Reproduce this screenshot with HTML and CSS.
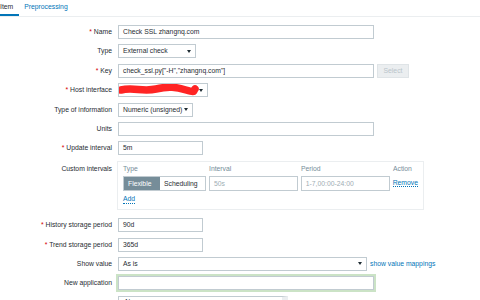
FILE: index.html
```html
<!DOCTYPE html>
<html lang="en">
<head>
    <meta charset="UTF-8" />
    <title>Item</title>
    <link rel="stylesheet" href="styles.css">
</head>
<body>
    <ul class="tabs">
        <li class="tab active">Item</li>
        <li class="tab">Preprocessing</li>
    </ul>

    <div class="form">
        <label class="form-label"><span class="req">*</span> Name</label>
        <div class="field"><div class="input w-wide">Check SSL zhangnq.com</div></div>

        <label class="form-label">Type</label>
        <div class="field"><div class="select w-type">External check</div></div>

        <label class="form-label"><span class="req">*</span> Key</label>
        <div class="field">
            <div class="input w-wide">check_ssl.py["-H","zhangnq.com"]</div>
            <button class="btn-disabled">Select</button>
        </div>

        <label class="form-label"><span class="req">*</span> Host interface</label>
        <div class="field">
            <div class="select w-host">
                <svg class="scribble" width="82" height="12" viewBox="0 0 82 12">
                    <path d="M3 6 C 15 3, 25 8, 38 5 S 58 3, 68 6 S 75 7, 77 5" stroke="#ff2424" stroke-width="7.5" stroke-linecap="round" fill="none"/>
                </svg>
            </div>
        </div>

        <label class="form-label">Type of information</label>
        <div class="field"><div class="select w-info">Numeric (unsigned)</div></div>

        <label class="form-label">Units</label>
        <div class="field"><div class="input w-wide"></div></div>

        <label class="form-label"><span class="req">*</span> Update interval</label>
        <div class="field"><div class="input w-small">5m</div></div>

        <label class="form-label label-top">Custom intervals</label>
        <div class="field">
            <div class="intervals">
                <div class="int-row int-head">
                    <span class="c1">Type</span>
                    <span class="c2">Interval</span>
                    <span class="c3">Period</span>
                    <span class="c4">Action</span>
                </div>
                <div class="int-row">
                    <div class="c1 radio-group">
                        <span class="radio on">Flexible</span>
                        <span class="radio">Scheduling</span>
                    </div>
                    <div class="c2 input muted">50s</div>
                    <div class="c3 input muted">1-7,00:00-24:00</div>
                    <a class="c4 link dotted">Remove</a>
                </div>
                <a class="link dotted add">Add</a>
            </div>
        </div>

        <label class="form-label"><span class="req">*</span> History storage period</label>
        <div class="field"><div class="input w-small">90d</div></div>

        <label class="form-label"><span class="req">*</span> Trend storage period</label>
        <div class="field"><div class="input w-small">365d</div></div>

        <label class="form-label">Show value</label>
        <div class="field">
            <div class="select w-show">As is</div>
            <a class="link">show value mappings</a>
        </div>

        <label class="form-label">New application</label>
        <div class="field"><div class="input w-wide focused"></div></div>

        <label class="form-label label-top">Applications</label>
        <div class="field">
            <div class="listbox">
                <div>-None-</div>
                <div>Checks</div>
            </div>
        </div>
    </div>
</body>
</html>
```

FILE: styles.css
```css
body {
    font-family: "Liberation Sans", Arial, sans-serif;
    font-size: 6.8px;
    color: #1f2c33;
    background: #fff;
    margin: 0;
    overflow: hidden;
}
.tabs {
    list-style: none;
    margin: 0;
    padding: 0;
    display: flex;
    height: 16px;
    border-bottom: 1px solid #ebeef0;
}
.tab {
    padding: 0 5.5px;
    line-height: 14px;
    color: #0275b8;
}
.tab.active {
    margin-left: -5.5px;
    color: #1f2c33;
    border-bottom: 2px solid #0275b8;
}
.form {
    display: grid;
    grid-template-columns: 112px 1fr;
    column-gap: 6px;
    row-gap: 5.4px;
    padding-top: 8px;
}
.form-label {
    text-align: right;
    line-height: 14px;
    white-space: nowrap;
}
.label-top {
    padding-top: 1px;
}
.req {
    color: #d40000;
}
.field {
    display: flex;
    align-items: center;
    gap: 3px;
    min-height: 14px;
}
.input,
.select {
    box-sizing: border-box;
    height: 14px;
    line-height: 12px;
    border: 1px solid #c1cbd1;
    padding: 0 4px;
    background: #fff;
    white-space: nowrap;
    overflow: hidden;
}
.select {
    position: relative;
    padding-right: 12px;
}
.select::after {
    content: "";
    position: absolute;
    right: 4px;
    top: 4.5px;
    border-left: 2.5px solid transparent;
    border-right: 2.5px solid transparent;
    border-top: 3.5px solid #1f2c33;
}
.w-wide { width: 256px; }
.w-small { width: 85px; }
.w-type { width: 78px; }
.w-host { width: 90px; }
.w-info { width: 75px; }
.w-show { width: 249px; }
.scribble {
    position: absolute;
    left: -1px;
    top: 0;
}
.btn-disabled {
    box-sizing: border-box;
    width: 32px;
    height: 14px;
    padding: 0;
    font: inherit;
    color: #b9c4ca;
    background: #ebeef0;
    border: 1px solid #dfe4e7;
}
.link {
    color: #0275b8;
    white-space: nowrap;
}
.dotted {
    border-bottom: 1px dotted #0275b8;
}
.focused {
    box-shadow: 0 0 0 2px #cbe3c6;
}
.intervals {
    box-sizing: border-box;
    width: 307px;
    height: 49px;
    margin-left: -1px;
    margin-bottom: 3px;
    border: 1px solid #ebeef0;
    padding: 2px 5px 0;
}
.int-row {
    display: flex;
    align-items: center;
    gap: 3px;
}
.int-head {
    color: #768d99;
    line-height: 10px;
    margin-bottom: 2px;
}
.c1 { width: 83px; }
.c2 { width: 89px; }
.c3 { width: 89px; }
.c4 { width: auto; }
.int-row .input {
    height: 15px;
    line-height: 13px;
}
.muted {
    color: #a0adb4;
}
.radio-group {
    display: flex;
    height: 15px;
    box-sizing: border-box;
    border: 1px solid #c1cbd1;
}
.radio {
    line-height: 13px;
    padding: 0 4px;
    color: #1f2c33;
}
.radio.on {
    width: 36px;
    box-sizing: border-box;
    background: #768d99;
    color: #fff;
}
.add {
    display: inline-block;
    margin-top: 4px;
    line-height: 8px;
}
.listbox {
    box-sizing: border-box;
    width: 170px;
    height: 60px;
    border: 1px solid #c1cbd1;
    border-right: 6px solid #ebeef0;
    padding: 0 4px;
    line-height: 9px;
}
```
